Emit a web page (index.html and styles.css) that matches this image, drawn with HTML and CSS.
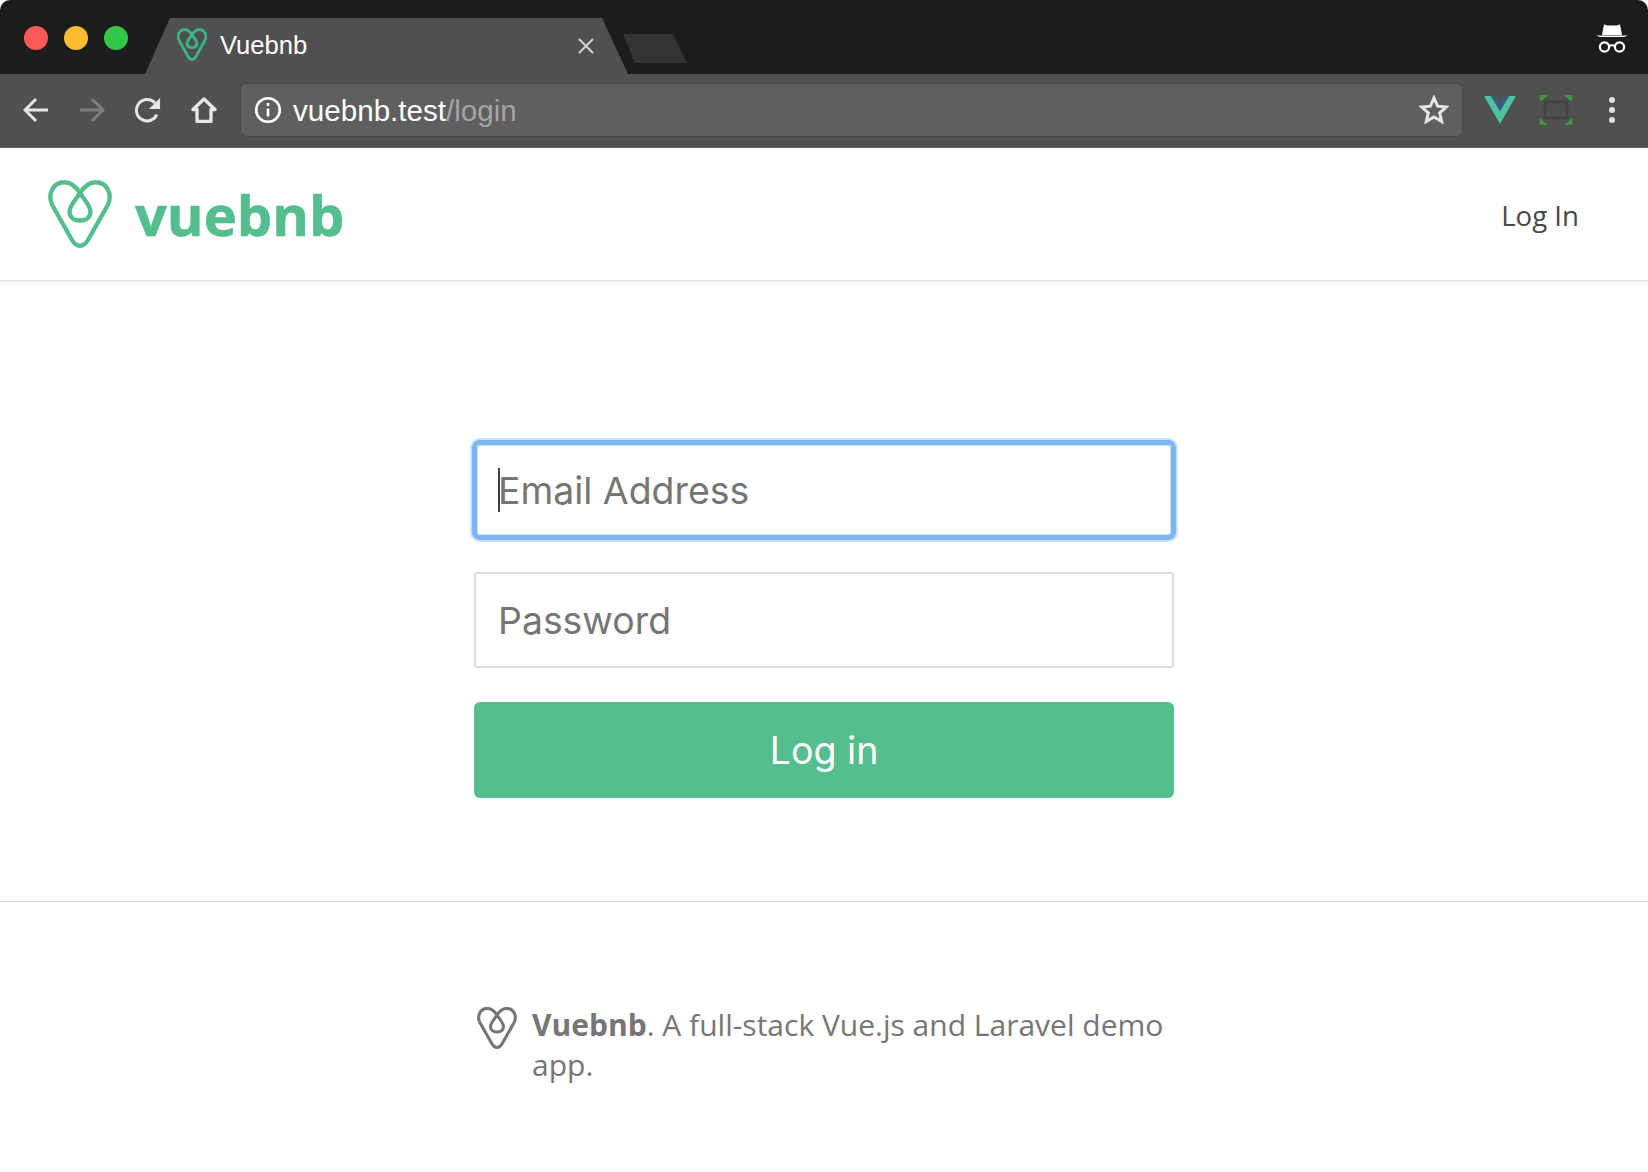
FILE: index.html
```html
<!DOCTYPE html>
<html lang="en">
<head>
<meta charset="utf-8">
<title>Vuebnb</title>
<link rel="stylesheet" href="styles.css">
</head>
<body>
<svg class="defs" width="0" height="0" aria-hidden="true">
  <symbol id="logo" viewBox="0 0 64 68">
    <path fill="none" stroke="currentColor" stroke-linejoin="round" d="M32 65.7C28.5 65.7 26 63.5 24 60L4.5 25.5C-1 15 4.5 2.3 16.5 2.3C23 2.3 28 7 32 13C36.5 20 42.5 26 42.5 31.5C42.5 37.5 38 40.5 32 40.5C26 40.5 21.5 37.5 21.5 31.5C21.5 26 27.5 20 32 13C36 7 41 2.3 47.5 2.3C59.5 2.3 65 15 59.5 25.5L40 60C38 63.5 35.5 65.7 32 65.7Z"/>
  </symbol>
</svg>
<div class="browser">
  <div class="tabstrip">
    <div class="lights">
      <span class="light light-red"></span>
      <span class="light light-yellow"></span>
      <span class="light light-green"></span>
    </div>
    <div class="tab">
      <svg class="tab-logo"><use href="#logo"/></svg>
      <span class="tab-title">Vuebnb</span>
      <svg class="tab-close" viewBox="0 0 16 16"><path d="M1 1L15 15M15 1L1 15"/></svg>
    </div>
    <div class="newtab"></div>
    <svg class="incognito" viewBox="0 0 32 30">
      <path class="inc-fill" d="M8 1.5C9.5 1.5 10.5 2.6 12 2.6H20C21.5 2.6 22.5 1.5 24 1.5L26 12H6Z"/>
      <path class="inc-fill" d="M0 12.5H32L28 14H4Z"/>
      <circle class="inc-line" cx="8.5" cy="24" r="4.6"/>
      <circle class="inc-line" cx="23.5" cy="24" r="4.6"/>
      <path class="inc-line" d="M13 23Q16 21.5 19 23"/>
    </svg>
  </div>
  <div class="toolbar">
    <svg class="navicon" viewBox="0 0 26 26"><path d="M25 13H3M13 2L2 13L13 24"/></svg>
    <svg class="navicon navicon-off" viewBox="0 0 26 26"><path d="M1 13H23M13 2L24 13L13 24"/></svg>
    <svg class="navicon navicon-reload" viewBox="0 0 28 26"><path d="M23.5 18A11.5 11.5 0 1 1 21.5 5.5"/><path class="nav-solid" d="M27 0V12H15Z"/></svg>
    <svg class="navicon navicon-home" viewBox="0 0 26 26"><path d="M13 2L2 12.5H6V24.5H20V12.5H24Z"/></svg>
    <div class="omnibox">
      <svg class="info" viewBox="0 0 28 28"><circle cx="14" cy="14" r="11.8"/><path d="M14 12.5V20.5M14 7V10"/></svg>
      <span class="url">vuebnb.test<span class="url-path">/login</span></span>
      <svg class="star" viewBox="0 0 30 29"><path d="M15 3L18.6 11.2L27.3 12L20.7 17.9L22.7 26.5L15 22L7.3 26.5L9.3 17.9L2.7 12L11.4 11.2Z"/></svg>
    </div>
    <div class="extensions">
      <svg class="ext-vue" viewBox="0 0 32 28"><path fill="#4cc3a0" d="M0 0H7L16 15L25 0H32L16 28Z"/><path fill="#3f5a78" d="M7 0H12L16 7L20 0H25L16 15Z"/></svg>
      <svg class="ext-frame" viewBox="0 0 32 30"><path fill="#3c9a3c" d="M0 0H8L0 7ZM32 0H24L32 7ZM0 30H8L0 23ZM32 30H24L32 23Z"/><rect x="5" y="7" width="22" height="16" fill="none" stroke="#434343" stroke-width="3"/></svg>
      <div class="menu-dots"><i></i><i></i><i></i></div>
    </div>
  </div>
</div>
<header class="site-header">
  <a class="brand">
    <svg class="brand-logo"><use href="#logo"/></svg>
    <span class="brand-name">vuebnb</span>
  </a>
  <a class="nav-link">Log In</a>
</header>
<main class="login">
  <form class="login-form">
    <div class="field">
      <input class="input input-focus" type="text" placeholder="Email Address">
      <span class="caret"></span>
    </div>
    <input class="input" type="password" placeholder="Password">
    <button class="submit" type="button">Log in</button>
  </form>
</main>
<footer class="site-footer">
  <div class="footer-inner">
    <svg class="footer-logo"><use href="#logo"/></svg>
    <p class="footer-text"><strong>Vuebnb</strong>. A full-stack Vue.js and Laravel demo app.</p>
  </div>
</footer>
</body>
</html>
```
FILE: styles.css
```css
* { box-sizing: border-box; }
html, body { margin: 0; padding: 0; background: #fff; }
body { height: 1172px; overflow: hidden; font-family: "Open Sans", sans-serif; }
.defs { position: absolute; }

.browser { font-family: "Liberation Sans", Arial, sans-serif; }
.tabstrip {
  height: 74px;
  background: #1b1c1e;
  border-radius: 10px 10px 0 0;
  display: flex;
  align-items: flex-start;
  padding: 0 20px 0 24px;
}
.lights { display: flex; gap: 16px; margin-top: 26px; width: 121px; flex: none; }
.light { width: 24px; height: 24px; border-radius: 50%; }
.light-red { background: #fc5b57; }
.light-yellow { background: #fdbb2f; }
.light-green { background: #32c748; }
.tab {
  width: 483px;
  height: 56px;
  margin-top: 18px;
  flex: none;
  background: #505050;
  clip-path: polygon(25px 0, 457px 0, 483px 100%, 0 100%);
  display: flex;
  align-items: center;
  padding: 0 33px 2px 32px;
  color: #fff;
}
.tab-logo { width: 30px; height: 33px; color: #3cb586; stroke-width: 6; flex: none; margin-top: -1px; }
.tab-title { margin-left: 13px; font-size: 25.6px; flex: 1; }
.tab-close { width: 16px; height: 16px; fill: none; stroke: #d4d4d4; stroke-width: 2; flex: none; margin-top: 2px; margin-right: 1px; }
.newtab {
  width: 64px;
  height: 29px;
  margin: 34px 0 0 -5px;
  flex: none;
  background: #333;
  clip-path: polygon(0 0, 50px 0, 64px 100%, 12px 100%);
}
.incognito { width: 32px; height: 30px; margin: 23px 0 0 auto; flex: none; }
.inc-fill { fill: #fff; }
.inc-line { fill: none; stroke: #fff; stroke-width: 2.2; }

.toolbar {
  height: 74px;
  background: #505050;
  display: flex;
  align-items: center;
  padding: 0 20px 2px 23px;
  border-bottom: 1px solid #666;
}
.navicon { width: 26px; height: 26px; fill: none; stroke: #e6e6e6; stroke-width: 3; flex: none; margin-right: 30px; }
.navicon-off { stroke: #7d7d7d; }
.navicon-reload { stroke-width: 3.2; }
.navicon-home { margin-right: 23px; stroke-linejoin: round; stroke-width: 3.4; }
.nav-solid { fill: #e6e6e6; stroke: none; }
.omnibox {
  width: 1223px;
  height: 54px;
  flex: none;
  background: #5f5f5f;
  border: 1px solid #484848;
  border-radius: 6px;
  display: flex;
  align-items: center;
  padding: 0 13px;
}
.info { width: 28px; height: 28px; fill: none; stroke: #fff; stroke-width: 2.6; flex: none; }
.url { margin: 3px 0 0 11px; font-size: 29.6px; line-height: 1; color: #fff; flex: 1; }
.url-path { color: #a5a5a5; }
.star { width: 30px; height: 29px; fill: none; stroke: #e6e6e6; stroke-width: 3; flex: none; }
.extensions { display: flex; align-items: center; margin-left: 21px; flex: 1; }
.ext-vue { width: 32px; height: 28px; flex: none; }
.ext-frame { width: 32px; height: 30px; margin-left: 24px; flex: none; }
.menu-dots { display: flex; flex-direction: column; gap: 4px; margin-left: 37px; }
.menu-dots i { display: block; width: 6px; height: 6px; border-radius: 50%; background: #e2e2e2; }

.site-header {
  height: 133px;
  display: flex;
  align-items: center;
  justify-content: space-between;
  padding: 0 69px 0 48px;
  border-bottom: 1px solid #e4e4e4;
  box-shadow: 0 2px 4px rgba(0, 0, 0, .08);
}
.brand { display: flex; align-items: center; }
.brand-logo { width: 64px; height: 68px; color: #55be8e; stroke-width: 4.4; flex: none; }
.brand-name { margin-left: 23px; font-size: 56px; font-weight: 700; line-height: 1; color: #55be8e; -webkit-text-stroke: .6px #55be8e; }
.nav-link { font-size: 27.6px; color: #484848; margin-top: 2px; }

.login { padding-top: 161px; display: flex; justify-content: center; height: 621px; border-bottom: 1px solid #d8d8d8; }
.login-form { width: 700px; display: flex; flex-direction: column; gap: 34px; }
.field { position: relative; display: flex; }
.input {
  width: 100%;
  height: 96px;
  padding: 0 22px;
  font-family: Inter, "Liberation Sans", sans-serif;
  font-size: 37.4px;
  background: #fff;
  border: 2px solid #dbdbdb;
  border-radius: 4px;
  outline: none;
}
.input::placeholder { color: #757575; opacity: 1; }
.input-focus {
  border: 3px solid #7db5f5;
  border-radius: 6px;
  box-shadow: 0 0 0 2px #7db5f5, 0 0 0 4px #c8e0fb, inset 0 0 0 1px #c8e0fb;
  padding: 0 21px;
}
.caret { position: absolute; left: 24px; top: 26px; width: 2px; height: 44px; background: #404040; }
.submit {
  height: 96px;
  border: 0;
  border-radius: 6px;
  background: #55be8e;
  color: #fff;
  font-family: Inter, "Liberation Sans", sans-serif;
  font-size: 37.6px;
}
.site-footer { display: flex; justify-content: center; padding-top: 103px; }
.footer-inner { width: 700px; display: flex; align-items: flex-start; }
.footer-logo { width: 40px; height: 42px; color: #767676; stroke-width: 5; flex: none; margin: 2px 15px 0 3px; }
.footer-text { margin: 0; font-size: 30px; line-height: 40px; color: #767676; }
```
